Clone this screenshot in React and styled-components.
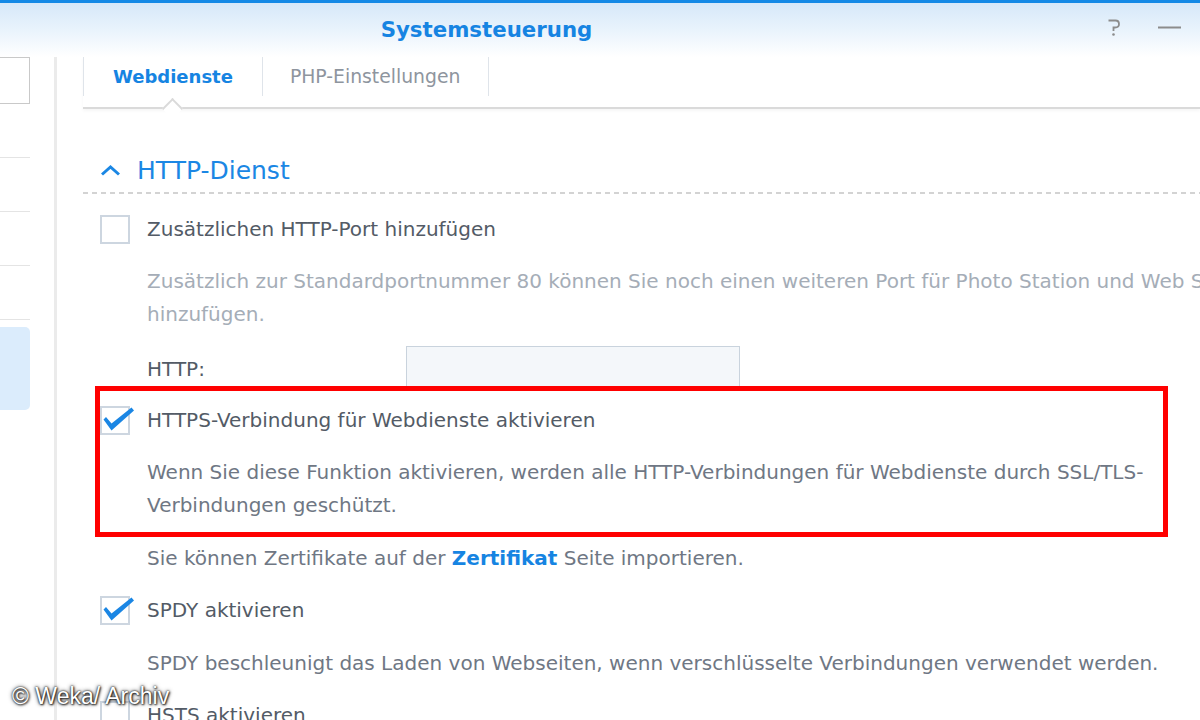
import React from 'react';
import styled, { createGlobalStyle } from 'styled-components';

const GlobalStyle = createGlobalStyle`
  html, body { margin: 0; padding: 0; background: #fff; }
  body { font-family: "DejaVu Sans", "Liberation Sans", sans-serif; }
  #root { width: 1200px; height: 720px; }
`;

const Window = styled.div`
  position: relative;
  width: 1200px;
  height: 720px;
  overflow: hidden;
  background: #fff;
  display: flex;
  flex-direction: column;
`;

const TitleBar = styled.header`
  flex: 0 0 auto;
  height: 54px;
  border-top: 3px solid #1489e6;
  background: linear-gradient(to bottom, #d6e8f9 0%, #e9f3fc 50%, #ffffff 100%);
  display: flex;
  align-items: center;
`;

const Title = styled.h1`
  margin: 0;
  flex: 0 0 973px;
  text-align: center;
  font-size: 21.3px;
  font-weight: bold;
  color: #1684e2;
  line-height: 1;
`;

const Controls = styled.div`
  display: flex;
  align-items: center;
  gap: 38px;
  margin-left: 135px;
`;

const IconButton = styled.span`
  display: inline-flex;
  width: ${p => p.$w}px;
  height: 22px;
`;

const Body = styled.div`
  flex: 1 1 auto;
  display: flex;
  min-height: 0;
`;

const Sidebar = styled.nav`
  flex: 0 0 54px;
`;

const NavList = styled.div`
  width: 30px;
  display: flex;
  flex-direction: column;
`;

const SearchBox = styled.div`
  height: 45px;
  border: 1px solid #c9c9c9;
  border-left: none;
  background: #fff;
`;

const NavItem = styled.div`
  height: 53px;
  border-bottom: 1px solid #e4e4e4;
`;

const NavItemActive = styled.div`
  margin-top: 7px;
  height: 83px;
  background: #dbecfc;
  border-radius: 0 5px 5px 0;
`;

const Main = styled.main`
  flex: 1 1 auto;
  min-width: 0;
  border-left: 3px solid #ebebeb;
  padding-left: 26px;
`;

const Tabs = styled.div`
  display: flex;
  align-items: flex-start;
  height: 50px;
  border-bottom: 2px solid #dadada;
  box-shadow: 0 2px 3px rgba(0, 0, 0, 0.04);
`;

const Tab = styled.div`
  position: relative;
  height: 39px;
  display: flex;
  align-items: center;
  padding: 0 ${p => (p.$first ? 29 : 28)}px 0 ${p => (p.$first ? 29 : 27)}px;
  border-right: 1px solid #dfe4ea;
  ${p => (p.$first ? 'border-left: 1px solid #dfe4ea;' : '')}
  font-size: ${p => (p.$active ? 18 : 18.8)}px;
  font-weight: ${p => (p.$active ? 'bold' : 'normal')};
  color: ${p => (p.$active ? '#1684e2' : '#8e959e')};

  ${p =>
    p.$active &&
    `
    &::after {
      content: '';
      position: absolute;
      left: calc(50% - 7.5px);
      top: calc(100% + 4.5px);
      width: 15px;
      height: 15px;
      box-sizing: border-box;
      background: #fff;
      border-top: 2px solid #dadada;
      border-left: 2px solid #dadada;
      transform: rotate(45deg);
      z-index: 1;
    }
  `}
`;

const SectionHeader = styled.div`
  margin-top: 44px;
  padding-left: 17px;
  height: 34px;
  display: flex;
  align-items: center;
  gap: 16px;
  font-size: 25px;
  color: #1b87e4;
`;

const DashedRule = styled.div`
  margin-top: 5px;
  height: 2px;
  background-image: repeating-linear-gradient(to right, #d3d3d3 0 5px, transparent 5px 9px);
`;

const Options = styled.div`
  padding-left: 17px;
`;

const CheckRow = styled.div`
  display: flex;
  align-items: center;
  gap: 17px;
  height: 29px;
  margin-top: ${p => p.$mt}px;
`;

const Box = styled.span`
  position: relative;
  flex: 0 0 auto;
  width: 30px;
  height: 29px;
  box-sizing: border-box;
  border: 2px solid #cdd6e0;
  background: #fff;
`;

const Tick = styled.svg`
  position: absolute;
  left: -2px;
  top: -2px;
  overflow: visible;
`;

const Label = styled.span`
  font-size: 20px;
  line-height: 29px;
  color: #535b66;
  white-space: nowrap;
`;

const Desc = styled.p`
  margin: ${p => p.$mt}px 0 0 47px;
  font-size: 20px;
  line-height: 33px;
  color: ${p => (p.$muted ? '#a5adb7' : '#6f7784')};
  white-space: nowrap;
`;

const Link = styled.span`
  font-weight: bold;
  color: #1684e2;
`;

const FieldRow = styled.div`
  margin: 15px 0 0 47px;
  display: flex;
  align-items: center;
  height: 40px;
`;

const FieldLabel = styled.span`
  flex: 0 0 259px;
  padding-top: 5px;
  font-size: 20px;
  color: #535b66;
`;

const Input = styled.div`
  width: 334px;
  height: 40px;
  box-sizing: border-box;
  border: 1px solid #c9d3dd;
  border-bottom: none;
  background: #f4f7fa;
`;

const Highlight = styled.div`
  margin-left: -5px;
  width: 1073px;
  box-sizing: border-box;
  border: 5px solid #ff0000;
  padding: 15px 0 10px 0;
`;

const Watermark = styled.div`
  position: absolute;
  left: 12px;
  top: 683px;
  font-family: "Liberation Sans", Arial, sans-serif;
  font-size: 23px;
  color: #fff;
  text-shadow: 0 0 2px #000, 0 0 4px rgba(0, 0, 0, 0.8), 1px 1px 2px rgba(0, 0, 0, 0.7);
  white-space: nowrap;
`;

function Checkbox({ checked }) {
  return (
    <Box>
      {checked && (
        <Tick width="36" height="30" viewBox="0 0 36 30">
          <path d="M3.5 13.5 L6 11 L11.5 17.5 L31.5 1.5 L34 4.5 L11.5 24.5 Z" fill="#1a86e4" />
        </Tick>
      )}
    </Box>
  );
}

function HelpIcon() {
  return (
    <svg width="12" height="22" viewBox="0 0 12 22">
      <path d="M0.5 1.5 H7.5 Q11 1.5 11 5 Q11 8.5 7 8.5 L5.5 8.5 V12" fill="none" stroke="#8c8c8c" strokeWidth="1.8" />
      <circle cx="5.5" cy="15.5" r="1.3" fill="#8c8c8c" />
    </svg>
  );
}

function MinIcon() {
  return (
    <svg width="23" height="22" viewBox="0 0 23 22">
      <rect x="0" y="7.5" width="23" height="2" fill="#8c8c8c" />
    </svg>
  );
}

function Chevron() {
  return (
    <svg width="21" height="11" viewBox="0 0 21 11">
      <path d="M2 9.5 L10.5 2 L19 9.5" fill="none" stroke="#1b87e4" strokeWidth="3" />
    </svg>
  );
}

export default function App() {
  return (
    <>
      <GlobalStyle />
      <Window>
        <TitleBar>
          <Title>Systemsteuerung</Title>
          <Controls>
            <IconButton $w={12}><HelpIcon /></IconButton>
            <IconButton $w={23}><MinIcon /></IconButton>
          </Controls>
        </TitleBar>
        <Body>
          <Sidebar>
            <NavList>
              <SearchBox />
              <NavItem />
              <NavItem />
              <NavItem />
              <NavItem />
              <NavItemActive />
            </NavList>
          </Sidebar>
          <Main>
            <Tabs>
              <Tab $first $active>Webdienste</Tab>
              <Tab>PHP-Einstellungen</Tab>
            </Tabs>
            <SectionHeader>
              <Chevron />
              <span>HTTP-Dienst</span>
            </SectionHeader>
            <DashedRule />
            <Options>
              <CheckRow $mt={21}>
                <Checkbox />
                <Label>Zusätzlichen HTTP-Port hinzufügen</Label>
              </CheckRow>
              <Desc $mt={21} $muted>
                Zusätzlich zur Standardportnummer 80 können Sie noch einen weiteren Port für Photo Station und Web Station
                <br />
                hinzufügen.
              </Desc>
              <FieldRow>
                <FieldLabel>HTTP:</FieldLabel>
                <Input />
              </FieldRow>
              <Highlight>
                <CheckRow $mt={0}>
                  <Checkbox checked />
                  <Label>HTTPS-Verbindung für Webdienste aktivieren</Label>
                </CheckRow>
                <Desc $mt={21}>
                  Wenn Sie diese Funktion aktivieren, werden alle HTTP-Verbindungen für Webdienste durch SSL/TLS-
                  <br />
                  Verbindungen geschützt.
                </Desc>
              </Highlight>
              <Desc $mt={5}>
                Sie können Zertifikate auf der <Link>Zertifikat</Link> Seite importieren.
              </Desc>
              <CheckRow $mt={21}>
                <Checkbox checked />
                <Label>SPDY aktivieren</Label>
              </CheckRow>
              <Desc $mt={22}>
                SPDY beschleunigt das Laden von Webseiten, wenn verschlüsselte Verbindungen verwendet werden.
              </Desc>
              <CheckRow $mt={21}>
                <Checkbox />
                <Label>HSTS aktivieren</Label>
              </CheckRow>
            </Options>
          </Main>
        </Body>
        <Watermark>© Weka/ Archiv</Watermark>
      </Window>
    </>
  );
}
